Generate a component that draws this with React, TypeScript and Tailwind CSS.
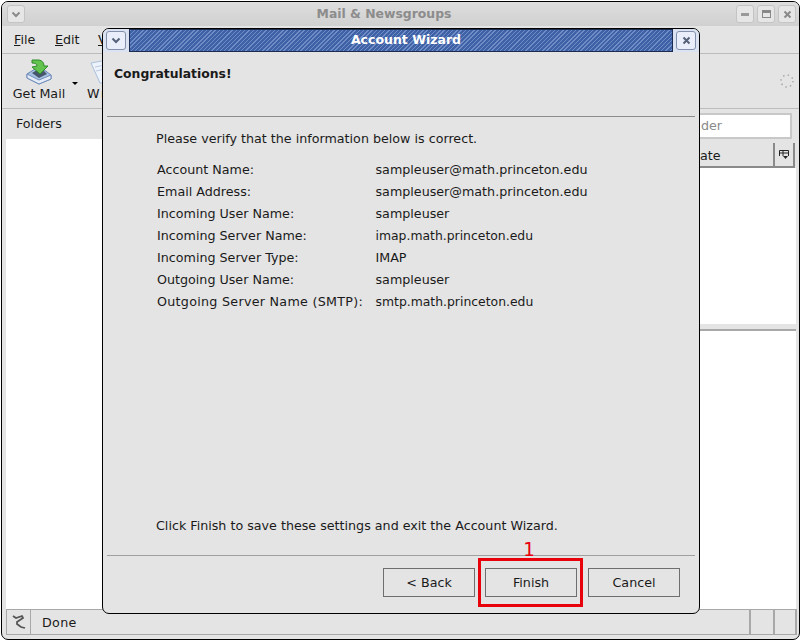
const rows = [
  ["Account Name:", "sampleuser@math.princeton.edu"],
  ["Email Address:", "sampleuser@math.princeton.edu"],
  ["Incoming User Name:", "sampleuser"],
  ["Incoming Server Name:", "imap.math.princeton.edu"],
  ["Incoming Server Type:", "IMAP"],
  ["Outgoing User Name:", "sampleuser"],
  ["Outgoing Server Name (SMTP):", "smtp.math.princeton.edu"],
]

function Chevron({ className }: { className: string }) {
  return (
    <svg width="10" height="7" viewBox="0 0 10 7" className={className}>
      <path d="M1.5 1.5 L5 5 L8.5 1.5" fill="none" stroke="currentColor" strokeWidth="2" />
    </svg>
  )
}

function Cross({ className }: { className: string }) {
  return (
    <svg width="9" height="9" viewBox="0 0 9 9" className={className}>
      <path d="M1.5 1.5 L7.5 7.5 M7.5 1.5 L1.5 7.5" fill="none" stroke="currentColor" strokeWidth="2" />
    </svg>
  )
}

function WmButton({ children }: { children: React.ReactNode }) {
  return (
    <div className="w-[18px] h-[18px] flex items-center justify-center rounded-[3px] border border-[#c4c4c4] bg-[#e6e6e6]">
      {children}
    </div>
  )
}

function DialogButton({ label, className = "" }: { label: string; className?: string }) {
  return (
    <div className={`w-[92px] h-[29px] flex items-center justify-center border border-[#6e6e6e] bg-[#e4e4e4] text-[#1a1a1a] ${className}`}>
      {label}
    </div>
  )
}

function GetMailIcon() {
  return (
    <svg width="26" height="26" viewBox="0 0 26 26">
      <path d="M1 15 L9 10 L17 10 L25 16 L25 20 L13 25 L1 19 Z" fill="#a9c1e2" stroke="#6684b4" />
      <path d="M6 14 L11 11 L18 12 L21 15 L13 19 Z" fill="#46566c" />
      <path d="M1 15 L13 21 L25 16 L25 20 L13 25 L1 19 Z" fill="#e4ebf7" stroke="#6f8dbb" />
      <path d="M6 1 L13 1 Q18 2 18 7 L22 7 L14 15 L6 8 L11 7 Q11 4 6 4 Z" fill="#62c44e" stroke="#2f8a2a" />
    </svg>
  )
}

function WriteIcon() {
  return (
    <svg width="20" height="26" viewBox="0 0 20 26">
      <path d="M3 4 L19 1 L19 24 L12 24 Z" fill="#eef3fb" stroke="#a9bfdc" />
      <path d="M7 8 L17 6 M8 12 L17 10" stroke="#b9c9e0" />
    </svg>
  )
}

function StatusIcon() {
  return (
    <svg width="18" height="18" viewBox="0 0 18 18">
      <path d="M3 3 L6 5 L12 3 L13 5 L7 9 L7 11 L11 14 L15 15" fill="none" stroke="#555" strokeWidth="1.8" />
    </svg>
  )
}

function Throbber() {
  return (
    <svg width="14" height="14" viewBox="0 0 14 14">
      <circle cx="7" cy="7" r="6" fill="none" stroke="#aaa" strokeWidth="1.5" strokeDasharray="1.5 3.2" />
    </svg>
  )
}

export default function App() {
  return (
    <div className="relative w-[801px] h-[641px] overflow-hidden bg-white font-['DejaVu_Sans','Liberation_Sans',sans-serif] text-[12.7px] text-[#1a1a1a] whitespace-nowrap">
      {/* main window */}
      <div className="absolute left-[1px] top-[1px] w-[799px] h-[639px] flex flex-col rounded-[7px] border border-black bg-[#e4e4e4] overflow-hidden">
        <div className="h-[24px] flex items-center justify-between pl-[5px] pr-[3px] bg-gradient-to-b from-[#dedede] to-[#d0d0d0]">
          <WmButton><Chevron className="text-[#8a8a8a]" /></WmButton>
          <span className="ml-[7px] font-bold text-[12.4px] text-[#8c8c8c]">Mail &amp; Newsgroups</span>
          <div className="flex gap-[3px]">
            <WmButton><div className="w-[8px] h-[3px] bg-[#999]" /></WmButton>
            <WmButton><div className="w-[9px] h-[8px] border border-t-[3px] border-[#888]" /></WmButton>
            <WmButton><Cross className="text-[#8a8a8a]" /></WmButton>
          </div>
        </div>
        <div className="h-[28px] flex items-center pl-[12px] border-b border-[#bcbcbc]">
          <span className="w-[41px]"><u>F</u>ile</span>
          <span className="w-[43px]"><u>E</u>dit</span>
          <span><u>V</u>iew</span>
        </div>
        <div className="h-[55px] flex justify-between pr-[5px] border-b border-[#bcbcbc]">
          <div className="flex pl-[10px] pt-[5px]">
            <div className="w-[54px] flex flex-col items-center">
              <GetMailIcon />
              <span className="-mt-[1px]">Get Mail</span>
            </div>
            <div className="w-0 h-0 mt-[23px] ml-[6px] border-x-[3px] border-x-transparent border-t-[3px] border-t-black" />
            <div className="ml-[9px] flex flex-col items-start">
              <div className="ml-[1px]"><WriteIcon /></div>
              <span className="-mt-[1px] tracking-[2px]">Write</span>
            </div>
          </div>
          <div className="pt-[20px]"><Throbber /></div>
        </div>
        <div className="flex-1 flex min-h-0">
          <div className="w-[97px] ml-[4px] flex flex-col">
            <div className="h-[30px] pl-[10px] flex items-center">Folders</div>
            <div className="flex-1 bg-white" />
          </div>
          <div className="flex-1 flex flex-col">
            <div className="h-[34px] flex justify-end items-start pr-[4px] pt-[4px]">
              <div className="w-[100px] h-[26px] flex items-center pl-[7px] border-2 border-[#c8c8c8] bg-white text-[#8a8a8a]">der</div>
            </div>
            <div className="h-[25px] flex justify-end pr-[1px]">
              <div className="w-[121px] flex items-center pl-[46px] pt-[2px] border-r-2 border-b-2 border-[#8a8a8a]">ate</div>
              <div className="w-[20px] flex items-center justify-center border-r-2 border-b-2 border-[#8a8a8a]">
                <svg width="12" height="11" viewBox="0 0 12 11">
                  <path d="M1.5 7 V1.5 H10.5 V7 M1.5 4 H10.5 M5 1.5 V7" fill="none" stroke="#222" />
                  <path d="M5 7 H10 L7.5 10 Z" fill="#222" />
                </svg>
              </div>
            </div>
            <div className="h-[156px] bg-white" />
            <div className="h-[7px] border-b-2 border-[#a8a8a8] bg-[#e4e4e4]" />
            <div className="flex-1 bg-white" />
          </div>
          <div className="w-[3px]" />
        </div>
        <div className="h-[30px] flex flex-col">
          <div className="h-[26px] flex ml-[4px] mr-[2px] border-y border-[#a8a8a8]">
            <div className="w-[25px] flex items-center justify-center border-x border-[#a8a8a8]"><StatusIcon /></div>
            <div className="flex-1 flex items-center pl-[11px] pt-[1px] tracking-[0.3px]">Done</div>
            <div className="w-[24px] border-l-2 border-[#a8a8a8]" />
            <div className="w-[24px] border-x-2 border-[#a8a8a8]" />
          </div>
        </div>
      </div>

      {/* account wizard dialog */}
      <div className="absolute left-[102px] top-[28px] w-[598px] h-[586px] flex flex-col rounded-[7px] border border-black bg-[#e4e4e4] overflow-hidden">
        <div className="h-[23px] flex items-stretch bg-[#dbe3f2]">
          <div className="w-[26px] flex items-center justify-center">
            <div className="w-[20px] h-[19px] flex items-center justify-center rounded-[3px] border border-[#8290ac] bg-[#e9eefa]">
              <Chevron className="text-[#56627a]" />
            </div>
          </div>
          <div className="flex-1 flex items-center justify-center pl-[10px] border border-[#1c2c50] bg-[#4a6cae] bg-[repeating-linear-gradient(135deg,#6f8cc6_0px,#6f8cc6_1px,#3f62a6_1px,#3f62a6_3px)] font-bold text-[12.5px] text-white">
            Account Wizard
          </div>
          <div className="w-[26px] flex items-center justify-center">
            <div className="w-[20px] h-[19px] flex items-center justify-center rounded-[3px] border border-[#8290ac] bg-[#e9eefa]">
              <Cross className="text-[#56627a]" />
            </div>
          </div>
        </div>
        <div className="h-[64px] pl-[11px] pt-[13px] font-bold text-[12.4px]">Congratulations!</div>
        <div className="h-px mx-[4px] bg-[#8c8c8c]" />
        <div className="flex-1 flex flex-col pl-[53px] pt-[13px]">
          <p className="leading-[18px]">Please verify that the information below is correct.</p>
          <div className="mt-[11px] ml-[1px] grid grid-cols-[218.5px_1fr] auto-rows-[22px] items-center">
            {rows.map(([label, value]) => (
              <div key={label} className="contents">
                <span className={label.includes("SMTP") ? "tracking-[0.28px]" : ""}>{label}</span>
                <span className={value.startsWith("imap") || value.startsWith("smtp") ? "text-[12.4px]" : ""}>{value}</span>
              </div>
            ))}
          </div>
          <p className="mt-auto mb-[20px] leading-[18px]">Click Finish to save these settings and exit the Account Wizard.</p>
        </div>
        <div className="h-px mx-[4px] bg-[#a0a0a0]" />
        <div className="relative h-[57px] flex justify-end gap-[10px] pr-[19px] pt-[12px]">
          <DialogButton label="< Back" />
          <DialogButton label="Finish" className="mr-[1px]" />
          <DialogButton label="Cancel" />
          {/* red annotation */}
          <div className="absolute left-[375px] top-[2px] w-[105px] h-[49px] border-[3px] border-[#e8000b]" />
          <span className="absolute left-[420px] -top-[21px] font-['DejaVu_Sans_Mono',monospace] text-[19px] text-[#e8000b]">1</span>
        </div>
      </div>
    </div>
  )
}
